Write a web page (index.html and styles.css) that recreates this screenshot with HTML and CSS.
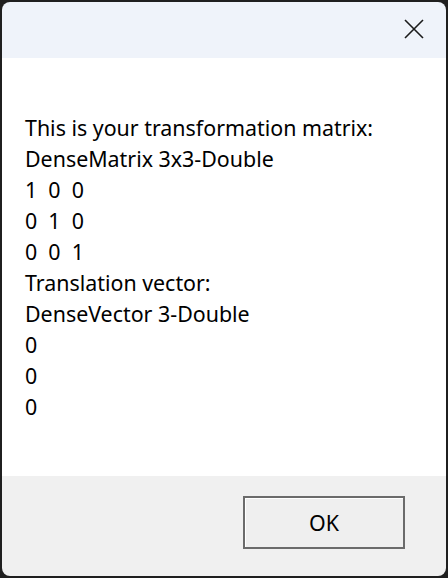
FILE: index.html
```html
<!DOCTYPE html>
<html>
<head>
<meta charset="utf-8">
<link rel="stylesheet" href="styles.css">
</head>
<body>
<div class="window">
  <div class="titlebar">
    <button class="close" aria-label="Close">
      <svg width="20" height="20" viewBox="0 0 20 20"><path d="M1 1 L19 19 M19 1 L1 19" stroke="#1b1b1b" stroke-width="1.6" fill="none"/></svg>
    </button>
  </div>
  <div class="content">
    <div class="line">This is your transformation matrix:</div>
    <div class="line">DenseMatrix 3x3-Double</div>
    <div class="line">1&nbsp; 0&nbsp; 0</div>
    <div class="line">0&nbsp; 1&nbsp; 0</div>
    <div class="line">0&nbsp; 0&nbsp; 1</div>
    <div class="line">Translation vector:</div>
    <div class="line">DenseVector 3-Double</div>
    <div class="line">0</div>
    <div class="line">0</div>
    <div class="line">0</div>
  </div>
  <div class="footer">
    <button class="ok">OK</button>
  </div>
</div>
</body>
</html>
```
FILE: styles.css
```css
html, body {
  margin: 0;
  padding: 0;
  background: #1f1f1f;
  width: 448px;
  height: 578px;
  overflow: hidden;
}
.window {
  margin: 2px;
  width: 444px;
  height: 574px;
  border-radius: 8px;
  overflow: hidden;
  display: flex;
  flex-direction: column;
  font-family: "Noto Sans", "Open Sans", sans-serif;
  color: #000;
}
.titlebar {
  height: 56px;
  background: #eff3fa;
  display: flex;
  justify-content: flex-end;
  align-items: flex-start;
}
.close {
  border: 0;
  background: transparent;
  padding: 0;
  margin: 17px 22px 0 0;
  width: 20px;
  height: 20px;
  display: block;
}
.close svg { display: block; }
.content {
  flex: 1;
  background: #ffffff;
  padding: 54px 0 0 23px;
  font-size: 21.4px;
  line-height: 31px;
}
.line { white-space: pre; }
.footer {
  height: 100px;
  background: #f0f0f0;
  display: flex;
  justify-content: flex-end;
  align-items: flex-start;
}
.ok {
  margin: 20px 41px 0 0;
  width: 162px;
  height: 53px;
  box-sizing: border-box;
  background: #efefef;
  border: 2px solid #6b6b6b;
  box-shadow: inset 1px 1px 0 #ffffff;
  font-family: "Noto Sans", "Open Sans", sans-serif;
  font-size: 21.4px;
  color: #000;
  padding: 0;
}
```
